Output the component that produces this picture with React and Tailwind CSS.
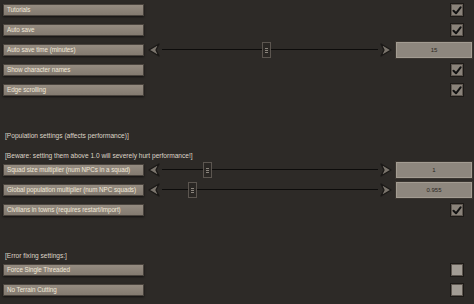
import React from 'react'

const font = { fontFamily: '"Liberation Sans", Arial, sans-serif' }

function Label({ text }) {
  return (
    <div className="ml-[3px] flex h-[12px] w-[141px] items-center overflow-hidden border border-[#4a443e] bg-gradient-to-b from-[#958c81] to-[#837a70] pl-[3px] shadow-[0_1px_2px_rgba(0,0,0,0.6)]">
      <span className="whitespace-nowrap text-[6.3px] leading-none tracking-[-0.05px] text-[#f1e8d8]">{text}</span>
    </div>
  )
}

function Check({ on }) {
  return (
    <div
      className={
        'flex h-[14px] w-[14px] items-center justify-center border border-[#1c1916] shadow-[inset_0_0_0_1px_#5e5750] ' +
        (on ? 'bg-[#8a837a]' : 'bg-[#a39d95]')
      }
    >
      {on && (
        <svg width="10" height="9" viewBox="0 0 10 9">
          <path d="M1.5 4.8 L4 7.3 L8.6 1.4" fill="none" stroke="#111" strokeWidth="2" strokeLinecap="round" strokeLinejoin="round" />
        </svg>
      )}
    </div>
  )
}

function Arrow({ dir }) {
  const pts = dir === 'left' ? '11,1 1,7 11,13 8,7' : '1,1 11,7 1,13 4,7'
  return (
    <svg width="12" height="14" viewBox="0 0 12 14" className="shrink-0">
      <polygon points={pts} fill="#7b756d" stroke="#1a1816" strokeWidth="1.3" strokeLinejoin="round" />
    </svg>
  )
}

function Slider({ pos, value }) {
  return (
    <div className="ml-[4px] flex flex-1 items-center">
      <Arrow dir="left" />
      <div className="relative mx-[2px] h-[18px] flex-1">
        <div className="absolute left-0 right-0 top-[8px] h-[1px] bg-[#0d0c0b]" />
        <div
          className="absolute top-[1px] flex h-[16px] w-[9px] flex-col items-center justify-center gap-[1px] border border-[#5c5650] bg-[#2a2724]"
          style={{ left: `calc(${pos * 100}% - 4px)` }}
        >
          <span className="h-[1px] w-[3px] bg-[#8a847c]" />
          <span className="h-[1px] w-[3px] bg-[#8a847c]" />
          <span className="h-[1px] w-[3px] bg-[#8a847c]" />
        </div>
      </div>
      <Arrow dir="right" />
      <div className="ml-[3px] mr-[1px] flex h-[18px] w-[78px] items-center justify-center border border-[#3a3530] bg-[#8e877e] shadow-[inset_0_0_0_1px_#a39c92]">
        <span className="text-[6px] leading-none text-[#2a2621]">{value}</span>
      </div>
    </div>
  )
}

function Row({ children }) {
  return <div className="flex h-[20px] items-center">{children}</div>
}

function CheckRow({ text, on }) {
  return (
    <Row>
      <Label text={text} />
      <div className="flex-1" />
      <div className="mr-[10px]">
        <Check on={on} />
      </div>
    </Row>
  )
}

function SliderRow({ text, pos, value }) {
  return (
    <Row>
      <Label text={text} />
      <Slider pos={pos} value={value} />
    </Row>
  )
}

function Note({ text }) {
  return (
    <div className="h-[20px] whitespace-nowrap pl-[5px] pt-[1px]">
      <span className="text-[6.6px] leading-[8px] text-[#ddd5c8]">{text}</span>
    </div>
  )
}

export default function App() {
  return (
    <div className="h-[304px] w-[474px] overflow-hidden bg-[#2d2a27]" style={font}>
      <CheckRow text="Tutorials" on />
      <CheckRow text="Auto save" on />
      <SliderRow text="Auto save time (minutes)" pos={0.48} value="15" />
      <CheckRow text="Show character names" on />
      <CheckRow text="Edge scrolling" on />
      <div className="h-[20px]" />
      <Note text="[Population settings (affects performance)]" />
      <Note text="[Beware: setting them above 1.0 will severely hurt performance!]" />
      <SliderRow text="Squad size multiplier (num NPCs in a squad)" pos={0.21} value="1" />
      <SliderRow text="Global population multiplier (num NPC squads)" pos={0.14} value="0.955" />
      <CheckRow text="Civilians in towns (requires restart/import)" on />
      <div className="h-[20px]" />
      <Note text="[Error fixing settings:]" />
      <CheckRow text="Force Single Threaded" />
      <CheckRow text="No Terrain Cutting" />
    </div>
  )
}
